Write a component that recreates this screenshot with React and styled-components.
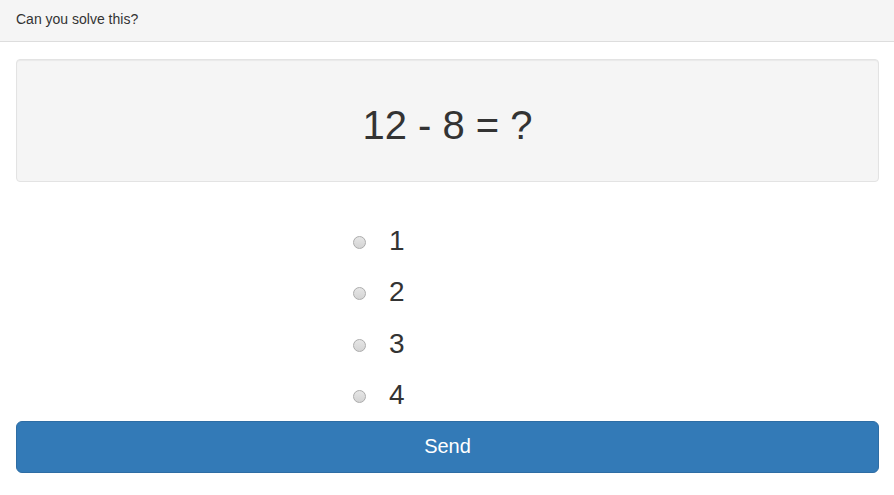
import React from 'react';
import styled, { createGlobalStyle } from 'styled-components';

const GlobalStyle = createGlobalStyle`
  body {
    margin: 0;
    background: #fff;
    font-family: "Liberation Sans", Arial, sans-serif;
    color: #333;
  }
`;

const answers = [1, 2, 3, 4];

const App = () => {
  return (
    <>
      <GlobalStyle />
      <Header>Can you solve this?</Header>
      <Container>
        <Well>12 - 8 = ?</Well>
        <Choices>
          {answers.map((a) => (
            <Choice key={a}>
              <Radio type="radio" name="answer" value={a} />
              <ChoiceLabel>{a}</ChoiceLabel>
            </Choice>
          ))}
        </Choices>
        <SendButton type="button">Send</SendButton>
      </Container>
    </>
  );
};

const Header = styled.div`
  height: 41px;
  line-height: 38px;
  padding: 0 16px;
  background: #f5f5f5;
  border-bottom: 1px solid #dddddd;
  font-size: 14px;
  color: #333;
`;

const Container = styled.div`
  padding: 17px 15px 0 16px;
`;

const Well = styled.div`
  box-sizing: border-box;
  height: 123px;
  display: flex;
  align-items: center;
  justify-content: center;
  background: #f5f5f5;
  border: 1px solid #e3e3e3;
  border-radius: 4px;
  box-shadow: inset 0 1px 1px rgba(0, 0, 0, 0.05);
  font-size: 40px;
  color: #333;
  padding-top: 10px;
`;

const Choices = styled.div`
  display: flex;
  flex-direction: column;
  margin-top: 34px;
  padding-left: 337px;
`;

const Choice = styled.label`
  height: 51.5px;
  display: flex;
  align-items: center;
  gap: 23px;
  cursor: pointer;
`;

const Radio = styled.input`
  appearance: none;
  margin: 1px 0 0;
  width: 13px;
  height: 13px;
  border-radius: 50%;
  border: 1px solid #acacac;
  background: linear-gradient(#e6e6e6, #d4d4d4);
  box-sizing: border-box;

  &:checked {
    background: radial-gradient(#333 0 3px, #e6e6e6 3.5px);
  }
`;

const ChoiceLabel = styled.span`
  font-size: 28px;
  color: #333;
  line-height: 1;
  margin-top: -2px;
`;

const SendButton = styled.button`
  display: block;
  width: 100%;
  height: 52px;
  margin-top: -1px;
  background: #337ab7;
  border: 1px solid #2e6da4;
  border-radius: 6px;
  color: #fff;
  font-family: "Liberation Sans", Arial, sans-serif;
  font-size: 20px;
  cursor: pointer;
  padding: 0 0 1px;

  &:hover {
    background: #286090;
  }
`;

export default App;
